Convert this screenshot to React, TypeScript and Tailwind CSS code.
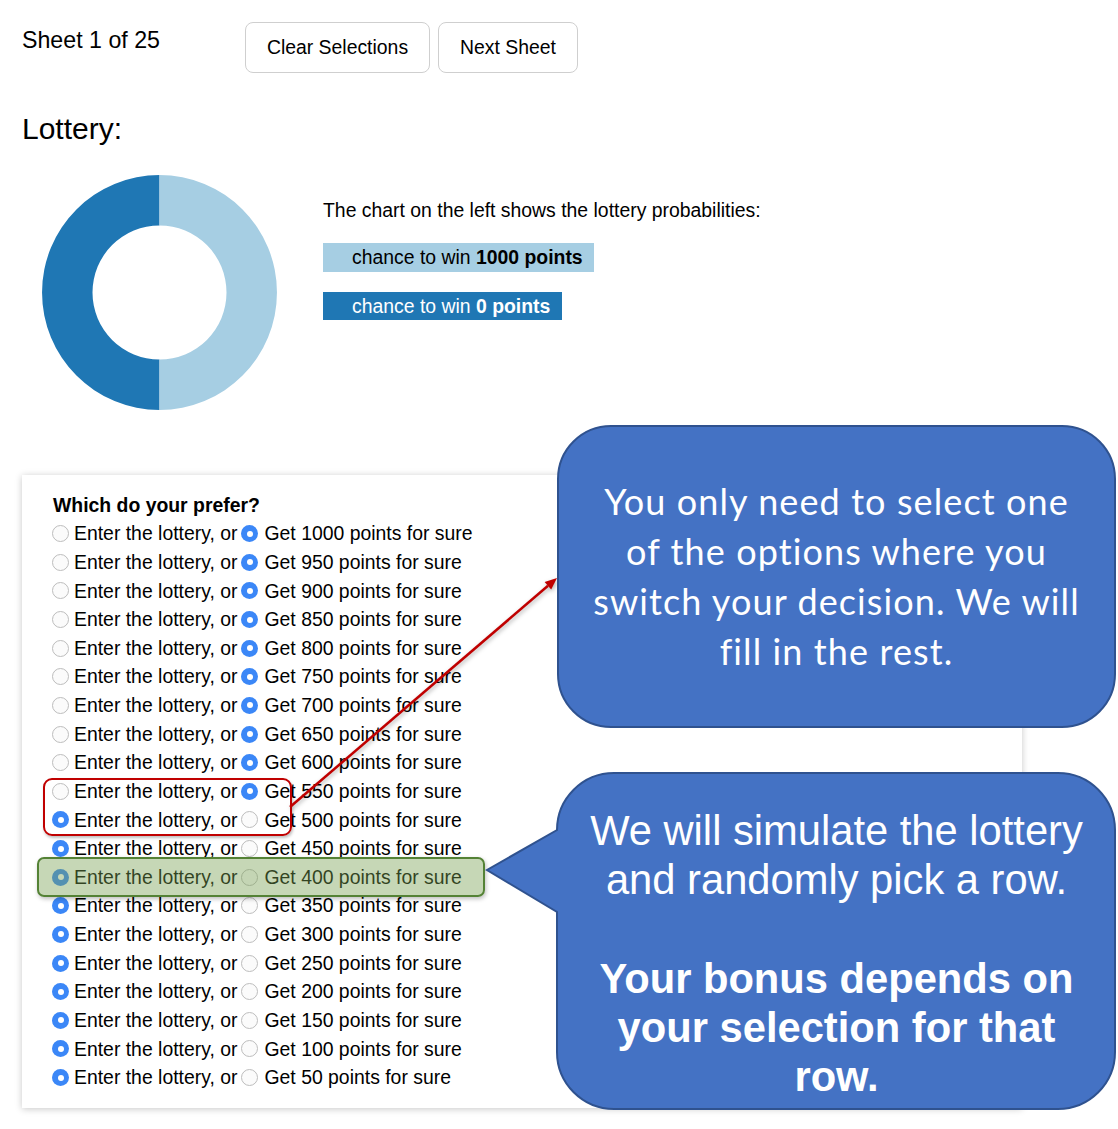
import React from "react";

const Radio = ({ on }: { on: boolean }) =>
  on ? (
    <span className="block w-[17px] h-[17px] rounded-full bg-[#3b87f7] flex items-center justify-center shrink-0">
      <span className="block w-[6px] h-[6px] rounded-full bg-white" />
    </span>
  ) : (
    <span className="block w-[17px] h-[17px] rounded-full border border-[#bdbdbd] bg-[#fbfbfb] shrink-0" />
  );

const values = [1000, 950, 900, 850, 800, 750, 700, 650, 600, 550, 500, 450, 400, 350, 300, 250, 200, 150, 100, 50];

function Donut() {
  const cx = 117.5;
  const cy = 117.5;
  const R = 117.5;
  const r = 67;
  const right = `M ${cx} ${cy - R} A ${R} ${R} 0 0 1 ${cx} ${cy + R} L ${cx} ${cy + r} A ${r} ${r} 0 0 0 ${cx} ${cy - r} Z`;
  const left = `M ${cx} ${cy - R} A ${R} ${R} 0 0 0 ${cx} ${cy + R} L ${cx} ${cy + r} A ${r} ${r} 0 0 1 ${cx} ${cy - r} Z`;
  return (
    <svg width="235" height="235" viewBox="0 0 235 235" className="shrink-0">
      <path d={left} fill="#1f77b4" />
      <path d={right} fill="#a6cee3" />
    </svg>
  );
}

export default function App() {
  return (
    <div
      className="relative w-[1118px] h-[1129px] overflow-hidden bg-white text-black text-[19.4px]"
      style={{ fontFamily: '"Liberation Sans", Arial, sans-serif' }}
    >
      {/* Header */}
      <div className="flex items-start pt-[22px] pl-[22px]">
        <div className="w-[223px] mt-[5px] text-[23.2px] leading-[27px]">Sheet 1 of 25</div>
        <div className="flex gap-[8px]">
          <button className="h-[51px] w-[185px] rounded-[8px] border border-[#cfcfcf] bg-white flex items-center justify-center">
            Clear Selections
          </button>
          <button className="h-[51px] w-[140px] rounded-[8px] border border-[#cfcfcf] bg-white flex items-center justify-center">
            Next Sheet
          </button>
        </div>
      </div>

      {/* Lottery title */}
      <div className="ml-[22px] mt-[38px] text-[30px] leading-[36px]">Lottery:</div>

      {/* Chart */}
      <div className="flex ml-[42px] mt-[28px]">
        <Donut />
        <div className="ml-[46px] pt-[24px] flex flex-col items-start">
          <div className="leading-[22px]">The chart on the left shows the lottery probabilities:</div>
          <div className="mt-[22px] h-[29px] leading-[29px] bg-[#a6cee3] pl-[29px] pr-[11px]">
            chance to win <b>1000 points</b>
          </div>
          <div className="mt-[20px] h-[28px] leading-[28px] bg-[#1f77b4] text-white pl-[29px] pr-[12px]">
            chance to win <b>0 points</b>
          </div>
        </div>
      </div>

      {/* Card */}
      <div className="ml-[22px] mt-[65px] w-[1000px] h-[633px] bg-white shadow-[0_1px_7px_rgba(0,0,0,0.22)] pt-[15.7px] pl-[30px]">
        <div className="h-[28.63px] leading-[28.63px] ml-[1px] font-bold">Which do your prefer?</div>
        {values.map((v) => (
          <div key={v} className="flex items-center h-[28.63px] leading-[28.63px] whitespace-nowrap">
            <Radio on={v < 550} />
            <span className="ml-[5px]">Enter the lottery, or</span>
            <span className="ml-[4px] block">
              <Radio on={v >= 550} />
            </span>
            <span className="ml-[6px]">Get {v} points for sure</span>
          </div>
        ))}
      </div>

      {/* Red box */}
      <div className="absolute left-[43px] top-[778px] w-[249px] h-[58px] rounded-[9px] border-[2.5px] border-[#c00000] shadow-[1px_2px_3px_rgba(0,0,0,0.25)]" />

      {/* Green box */}
      <div className="absolute left-[37px] top-[857px] w-[448px] h-[40px] rounded-[7px] border-2 border-[#548235] bg-[rgba(120,160,80,0.42)] shadow-[1px_2px_4px_rgba(0,0,0,0.25)]" />

      {/* Arrow */}
      <svg
        className="absolute left-0 top-0 pointer-events-none drop-shadow-[1px_2px_2px_rgba(0,0,0,0.3)]"
        width="1118"
        height="1129"
        viewBox="0 0 1118 1129"
      >
        <line x1="290" y1="807" x2="548" y2="585.8" stroke="#c00000" strokeWidth="2.5" />
        <polygon points="557,578 551.2,589.6 544.6,582" fill="#c00000" />
      </svg>

      {/* Callout 1 */}
      <div className="absolute left-[557px] top-[425px] w-[559px] h-[303px] rounded-[54px] bg-[#4472c4] border-2 border-[#2f528f]" />
      <div
        className="absolute left-[557px] top-[476px] w-[559px] text-center text-white text-[36px] tracking-[1.1px] leading-[50px]"
        style={{ fontFamily: 'Lato, "Open Sans", sans-serif' }}
      >
        You only need to select one
        <br />
        of the options where you
        <br />
        switch your decision. We will
        <br />
        fill in the rest.
      </div>

      {/* Callout 2 */}
      <svg className="absolute left-0 top-0 pointer-events-none" width="1118" height="1129" viewBox="0 0 1118 1129">
        <path
          d="M 614 773 H 1058 A 57 57 0 0 1 1115 830 V 1052 A 57 57 0 0 1 1058 1109 H 614 A 57 57 0 0 1 557 1052 V 912 L 487 870 L 557 830 A 57 57 0 0 1 614 773 Z"
          fill="#4472c4"
          stroke="#2f528f"
          strokeWidth="2"
        />
      </svg>
      <div className="absolute left-[557px] top-[806px] w-[559px] text-center text-white text-[41.7px] leading-[49.3px]">
        We will simulate the lottery
        <br />
        and randomly pick a row.
        <br />
        <br />
        <b>Your bonus depends on</b>
        <br />
        <b>your selection for that</b>
        <br />
        <b>row.</b>
      </div>
    </div>
  );
}
